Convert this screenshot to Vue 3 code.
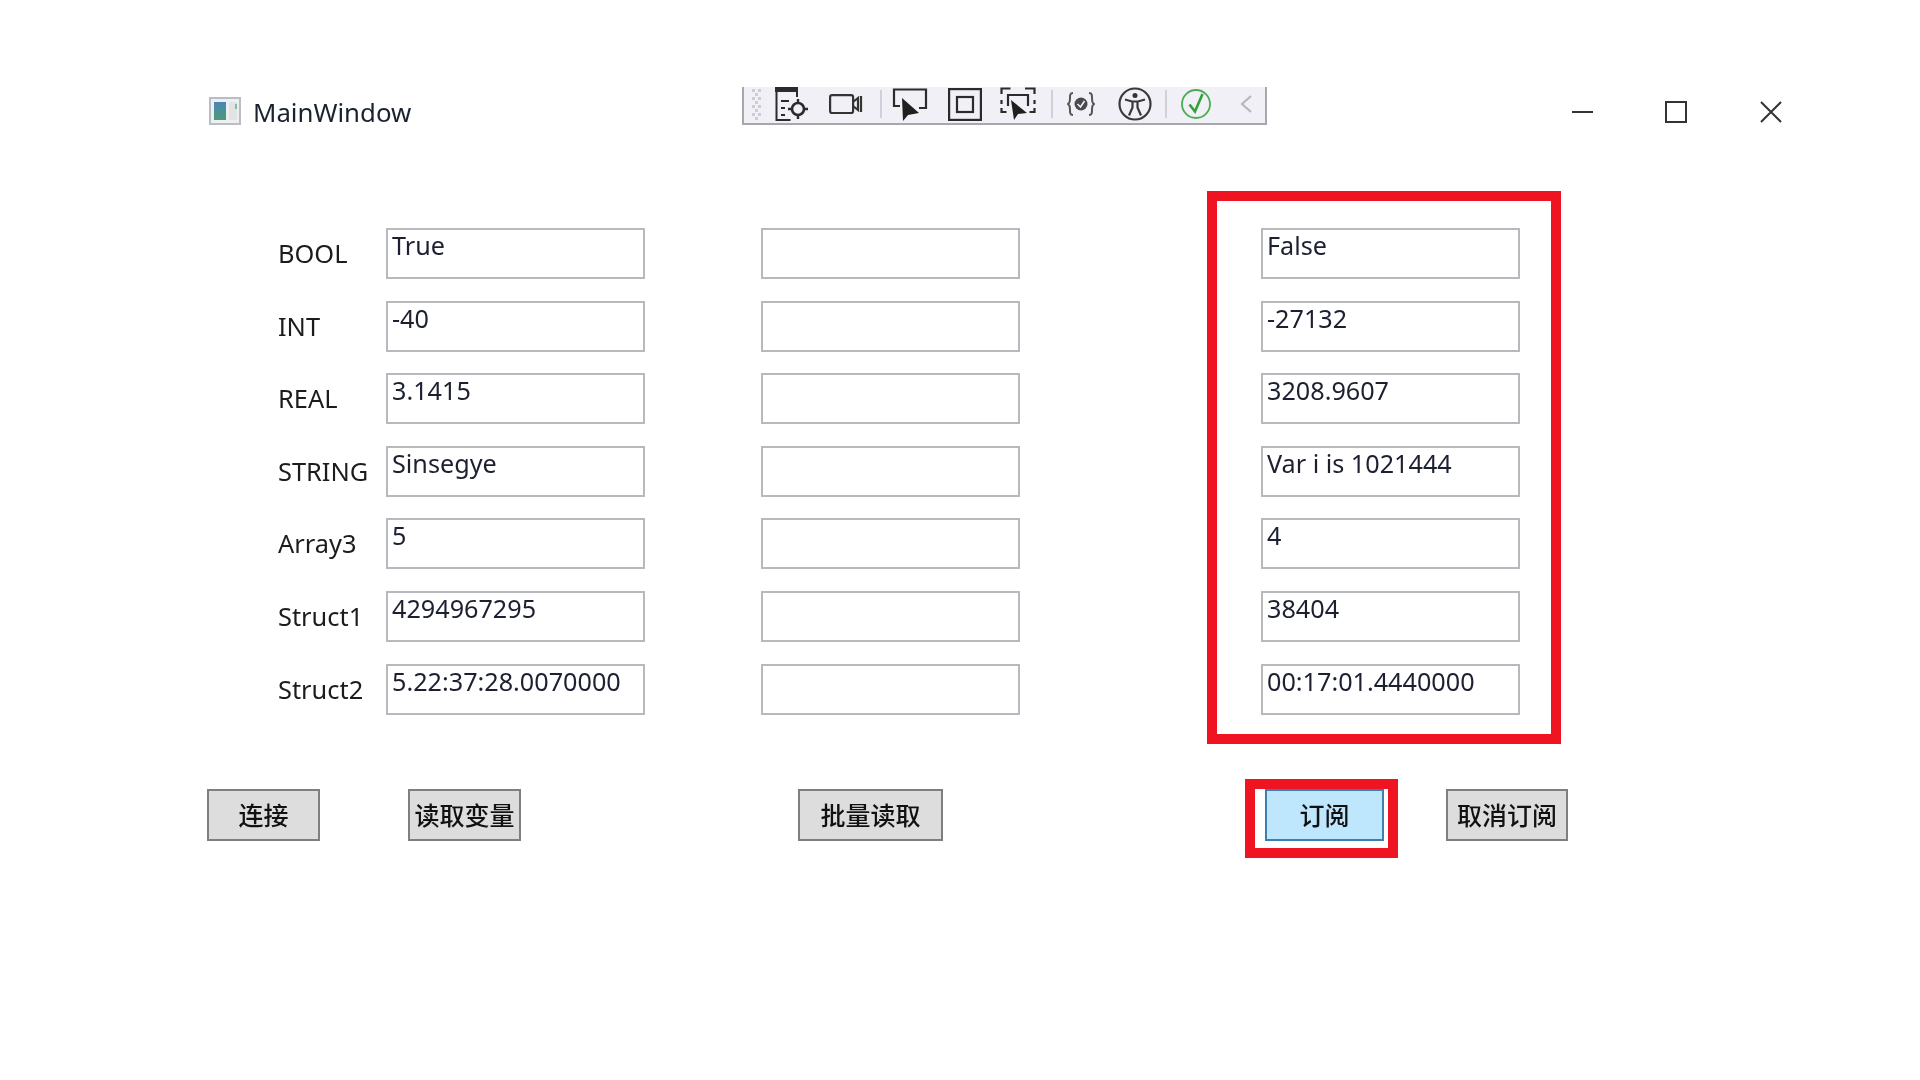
<script setup>
const rows = [
  { label: 'BOOL', a: 'True', c: 'False' },
  { label: 'INT', a: '-40', c: '-27132' },
  { label: 'REAL', a: '3.1415', c: '3208.9607' },
  { label: 'STRING', a: 'Sinsegye', c: 'Var i is 1021444' },
  { label: 'Array3', a: '5', c: '4' },
  { label: 'Struct1', a: '4294967295', c: '38404' },
  { label: 'Struct2', a: '5.22:37:28.0070000', c: '00:17:01.4440000' }
]
</script>

<template>
  <div class="window">
    <header class="titlebar">
      <svg class="app-icon" width="32" height="28" viewBox="0 0 32 28">
        <defs>
          <linearGradient id="appfill" x1="0" y1="0" x2="0" y2="1">
            <stop offset="0" stop-color="#4a86b8" />
            <stop offset="1" stop-color="#4f9a76" />
          </linearGradient>
        </defs>
        <rect x="1" y="1" width="30" height="26" fill="#eeeff1" stroke="#b9bdc4" stroke-width="2" />
        <rect x="5" y="5" width="12" height="18" fill="url(#appfill)" />
        <rect x="20" y="5" width="8" height="18" fill="#e2e4e4" />
        <rect x="26" y="7" width="2" height="5" fill="#7cc0a8" />
      </svg>
      <span class="title">MainWindow</span>
      <div class="toolbar">
        <svg class="grip" width="14" height="32" viewBox="0 0 14 32">
          <g fill="#cdcdd4">
            <rect x="2" y="1" width="3" height="3" /><rect x="8" y="1" width="3" height="3" />
            <rect x="5" y="5" width="3" height="3" />
            <rect x="2" y="9" width="3" height="3" /><rect x="8" y="9" width="3" height="3" />
            <rect x="5" y="13" width="3" height="3" />
            <rect x="2" y="17" width="3" height="3" /><rect x="8" y="17" width="3" height="3" />
            <rect x="5" y="21" width="3" height="3" />
            <rect x="2" y="25" width="3" height="3" /><rect x="8" y="25" width="3" height="3" />
            <rect x="5" y="29" width="3" height="3" />
          </g>
        </svg>
        <svg class="i1" width="34" height="34" viewBox="0 0 34 34" fill="none" stroke="#2b2b2b" stroke-width="2">
          <path d="M0 0h23v5H0z" fill="#2b2b2b" stroke="none" />
          <path d="M1.500 4v29h14M22 5v5" />
          <path d="M6 14h8M6 21h4M6 28h4" />
          <circle cx="23" cy="22" r="6" stroke-width="2.600" />
          <path d="M23 12v5M23 27v5M13 22h5M28 22h5" stroke-width="2.400" />
        </svg>
        <svg class="i2" width="34" height="20" viewBox="0 0 34 20" fill="none" stroke="#333" stroke-width="2.200">
          <rect x="1.100" y="1.100" width="23" height="18" rx="2" />
          <path d="M24 8l5-4v12l-5-4M32 2v16" />
        </svg>
        <i class="sep"></i>
        <svg class="i3" width="36" height="33" viewBox="0 0 36 33" fill="none" stroke="#2b2b2b" stroke-width="2.200">
          <path d="M8 18H2V1.500h32V20h-7" />
          <path d="M10 10l1 23 5-6 11-2z" fill="#1f1f1f" stroke="none" />
        </svg>
        <svg class="i4" width="34" height="33" viewBox="0 0 34 33" fill="none" stroke="#2b2b2b" stroke-width="2.200">
          <rect x="1.100" y="1.100" width="31.800" height="30.800" />
          <rect x="9" y="9" width="16" height="15" />
        </svg>
        <svg class="i5" width="36" height="34" viewBox="0 0 36 34" fill="none" stroke="#2b2b2b" stroke-width="2.200">
          <path d="M1.500 7V1.500h9M25 1.500h9.500V7M1.500 13v4M34.500 13v4M1.500 21v4h5M34.500 21v4h-5" />
          <path d="M8 19V8h20v11" />
          <path d="M11 13l3 20 4-6 9-1z" fill="#1f1f1f" stroke="none" />
        </svg>
        <i class="sep"></i>
        <span class="braces">
          <svg width="28" height="24" viewBox="0 0 28 24" fill="none" stroke="#555" stroke-width="2">
            <path d="M6 1c-3 0-3 2-3 5s0 5-2 6c2 1 2 3 2 6s0 5 3 5M22 1c3 0 3 2 3 5s0 5 2 6c-2 1-2 3-2 6s0 5-3 5" />
            <circle cx="14" cy="12" r="6.500" fill="#4a4a4a" stroke="none" />
            <path d="M10.500 12l3 3 4-6" stroke="#f0f0f6" stroke-width="1.600" />
          </svg>
        </span>
        <svg class="i6" width="34" height="34" viewBox="0 0 34 34" fill="none" stroke="#3a3a3a" stroke-width="2.200">
          <circle cx="17" cy="17" r="15.500" />
          <circle cx="17" cy="8.500" r="2.500" fill="#333" stroke="none" />
          <path d="M7 12.500l7 2h6l7-2M14.500 14.500v6l-3.500 8M19.500 14.500v6l3.500 8" />
        </svg>
        <i class="sep"></i>
        <svg class="i7" width="30" height="30" viewBox="0 0 30 30" fill="none">
          <circle cx="15" cy="15" r="14" stroke="#4aad52" stroke-width="1.800" />
          <path d="M8.500 15.500l5.500 7L21.500 5" stroke="#2fa23a" stroke-width="2.600" />
        </svg>
        <svg class="i8" width="12" height="18" viewBox="0 0 12 18" fill="none" stroke="#b4b4bc" stroke-width="2">
          <path d="M11 1L2 9l9 8" />
        </svg>
      </div>
      <div class="caption">
        <svg width="22" height="22" viewBox="0 0 22 22"><path d="M0 11h21" stroke="#333" stroke-width="2" /></svg>
        <svg width="22" height="22" viewBox="0 0 22 22" fill="none"><rect x="1" y="1" width="20" height="20" stroke="#333" stroke-width="2" /></svg>
        <svg class="close" width="22" height="22" viewBox="0 0 22 22"><path d="M1 1l20 20M21 1L1 21" stroke="#333" stroke-width="2" /></svg>
      </div>
    </header>

    <main class="form">
      <div class="labels">
        <div v-for="r in rows" :key="r.label" class="label">{{ r.label }}</div>
      </div>
      <div class="col">
        <div v-for="r in rows" :key="r.label" class="box">{{ r.a }}</div>
      </div>
      <div class="col mid">
        <div v-for="r in rows" :key="r.label" class="box"></div>
      </div>
      <div class="col sub">
        <div v-for="r in rows" :key="r.label" class="box">{{ r.c }}</div>
      </div>
    </main>

    <footer class="actions">
      <button class="btn b1">连接</button>
      <button class="btn b2">读取变量</button>
      <button class="btn b3">批量读取</button>
      <div class="mark"><button class="btn b4">订阅</button></div>
      <button class="btn b5">取消订阅</button>
    </footer>
  </div>
</template>

<style>
html, body { background: #fff; }
</style>

<style scoped>
.window {
  width: 1920px;
  height: 1080px;
  box-sizing: border-box;
  padding-top: 87px;
  background: #fff;
  overflow: hidden;
  font-family: "Noto Sans", "Noto Sans CJK SC", sans-serif;
  color: #1c1c1c;
  filter: blur(0.5px);
}
.titlebar {
  display: flex;
  align-items: flex-start;
  height: 104px;
  padding-left: 209px;
}
.app-icon { margin-top: 10px; flex: none; }
.title {
  margin-left: 12px;
  margin-top: 7px;
  font-size: 25.800px;
  line-height: 36px;
  width: 489px;
  flex: none;
  color: #1a2230;
}
.toolbar {
  display: flex;
  align-items: center;
  width: 525px;
  height: 38px;
  box-sizing: border-box;
  background: #f0f0f6;
  border: 2px solid #a8a8ac;
  border-top: 0;
  padding-left: 6px;
  padding-bottom: 2px;
  flex: none;
}
.toolbar svg { flex: none; }
.grip { margin-right: 11px; }
.i1 { margin-right: 20px; }
.i2 { margin-right: 17px; }
.sep { width: 2px; height: 28px; background: #cfd0dc; flex: none; }
.i3 { margin-left: 10px; margin-right: 20px; }
.i4 { margin-right: 18px; }
.i5 { margin-right: 15px; }
.braces { margin-left: 14px; margin-right: 23px; display: flex; }
.i6 { margin-right: 13px; }
.i7 { margin-left: 14px; margin-right: 29px; }
.caption {
  display: flex;
  align-items: center;
  gap: 71px;
  margin-left: 305px;
  margin-top: 14px;
}
.close { margin-left: 2px; }
.form {
  display: flex;
  align-items: flex-start;
  padding-left: 278px;
}
.labels { width: 108px; padding-top: 44px; display: flex; flex-direction: column; }
.label { height: 72.600px; font-size: 25.400px; line-height: 36px; }
.col { display: flex; flex-direction: column; gap: 21.600px; width: 259px; padding-top: 37px; }
.mid { margin-left: 116px; }
.sub {
  box-sizing: content-box;
  border: 10px solid #ee1421;
  margin-left: 187px;
  padding: 27px 31px 19px 44px;
  gap: 21.600px;
}
.box {
  height: 51px;
  box-sizing: border-box;
  border: 2px solid #b8b9bf;
  padding: 0 4px;
  font-size: 25.200px;
  line-height: 30px;
  color: #1c2030;
  white-space: nowrap;
}
.actions {
  display: flex;
  align-items: flex-start;
  padding-left: 207px;
  margin-top: 45px;
}
.btn {
  height: 52px;
  box-sizing: border-box;
  border: 2px solid #7f7f7f;
  background: #dddddd;
  font-family: inherit;
  font-size: 25px;
  font-weight: 500;
  line-height: 1;
  padding: 2px 0 0;
  color: #111;
}
.b1 { width: 113px; }
.b2 { width: 113px; margin-left: 88px; }
.b3 { width: 145px; margin-left: 277px; }
.mark {
  border: 10px solid #ee1421;
  margin-left: 302px;
  margin-top: -10px;
  padding-left: 10px;
  padding-right: 4px;
  height: 79px;
  box-sizing: border-box;
  display: flex;
}
.b4 { width: 119px; background: #bee6fd; border-color: #3c7fb1; }
.b5 { width: 122px; margin-left: 48px; }
</style>
